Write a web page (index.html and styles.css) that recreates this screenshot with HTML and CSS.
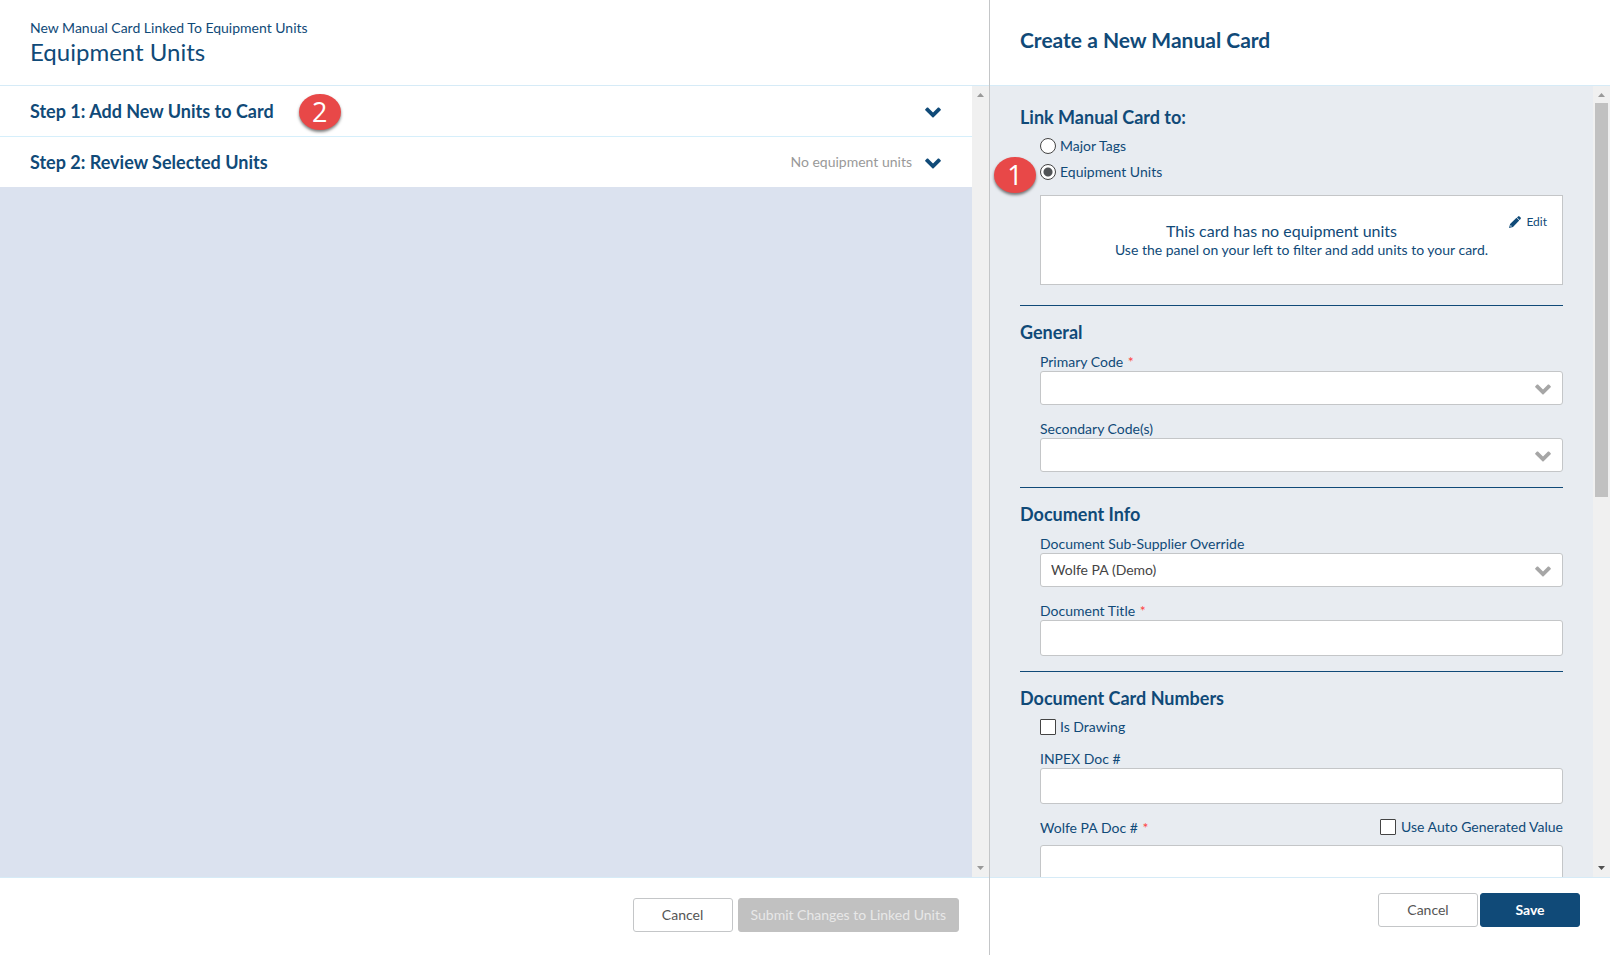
FILE: index.html
```
<!DOCTYPE html>
<html lang="en">
<head>
<meta charset="utf-8">
<title>Create a New Manual Card</title>
<link rel="stylesheet" href="styles.css">
</head>
<body>
<svg class="sprite" aria-hidden="true">
  <symbol id="chevron" viewBox="0 0 16 11"><path d="M0.3 2.3 2 0.6Q2.5 0.2 3 0.6L8 5.6 13 0.6Q13.5 0.2 14 0.6L15.7 2.3Q16.1 2.8 15.7 3.3L8.4 10.4Q8 10.8 7.6 10.4L0.3 3.3Q-0.1 2.8 0.3 2.3z"/></symbol>
  <symbol id="pencil" viewBox="0 0 12 12"><path d="M8 1.4 9.1 0.4Q9.8-0.2 10.5 0.4L11.6 1.5Q12.2 2.2 11.6 2.9L10.6 4zM7.5 1.8 10.2 4.5 4 10.9 0 12 1.1 8zM1.7 9.1 1.3 10.7 2.9 10.3z" fill-rule="evenodd"/></symbol>
  <symbol id="up" viewBox="0 0 7 4"><path d="M0 4 3.5 0 7 4z"/></symbol>
  <symbol id="down" viewBox="0 0 7 4"><path d="M0 0H7L3.5 4z"/></symbol>
</svg>
<div class="app">
  <main class="pane pane-main">
    <header class="pane-header">
      <p class="kicker">New Manual Card Linked To Equipment Units</p>
      <h1 class="title">Equipment Units</h1>
    </header>
    <div class="pane-body">
      <div class="steps">
        <button type="button" class="step">
          <span class="step-title">Step 1: Add New Units to Card</span>
          <span class="badge">2</span>
          <svg class="chevron step-chevron"><use href="#chevron"/></svg>
        </button>
        <button type="button" class="step">
          <span class="step-title">Step 2: Review Selected Units</span>
          <span class="step-note">No equipment units</span>
          <svg class="chevron step-chevron"><use href="#chevron"/></svg>
        </button>
      </div>
      <div class="scrollbar" aria-hidden="true">
        <svg class="arrow"><use href="#up"/></svg>
        <svg class="arrow"><use href="#down"/></svg>
      </div>
    </div>
    <footer class="pane-footer">
      <button type="button" class="button">Cancel</button>
      <button type="button" class="button button-disabled" disabled>Submit Changes to Linked Units</button>
    </footer>
  </main>

  <aside class="pane pane-side">
    <header class="pane-header side-header">
      <h2 class="side-title">Create a New Manual Card</h2>
    </header>
    <div class="pane-body">
      <form class="form" id="card-form">
        <section class="section">
          <h3 class="section-title">Link Manual Card to:</h3>
          <div class="section-content">
            <label class="choice"><input class="radio" type="radio" name="link">Major Tags</label>
            <label class="choice"><input class="radio" type="radio" name="link" checked>Equipment Units<span class="badge badge-over">1</span></label>
            <div class="notice">
              <p class="notice-title">This card has no equipment units</p>
              <p class="notice-text">Use the panel on your left to filter and add units to your card.</p>
              <button type="button" class="edit"><svg class="pencil"><use href="#pencil"/></svg>Edit</button>
            </div>
          </div>
        </section>
        <section class="section">
          <h3 class="section-title">General</h3>
          <div class="section-content fields">
            <div class="field">
              <label class="label" for="primary">Primary Code <span class="required">*</span></label>
              <div class="select-wrap"><select class="control select" id="primary"><option></option></select><svg class="chevron select-chevron"><use href="#chevron"/></svg></div>
            </div>
            <div class="field">
              <label class="label" for="secondary">Secondary Code(s)</label>
              <div class="select-wrap"><select class="control select" id="secondary"><option></option></select><svg class="chevron select-chevron"><use href="#chevron"/></svg></div>
            </div>
          </div>
        </section>
        <section class="section">
          <h3 class="section-title">Document Info</h3>
          <div class="section-content fields">
            <div class="field">
              <label class="label" for="supplier">Document Sub-Supplier Override</label>
              <div class="select-wrap"><select class="control select" id="supplier"><option>Wolfe PA (Demo)</option></select><svg class="chevron select-chevron"><use href="#chevron"/></svg></div>
            </div>
            <div class="field">
              <label class="label" for="doc-title">Document Title <span class="required">*</span></label>
              <input class="control" id="doc-title" type="text">
            </div>
          </div>
        </section>
        <section class="section">
          <h3 class="section-title">Document Card Numbers</h3>
          <div class="section-content">
            <label class="choice"><input class="checkbox" type="checkbox">Is Drawing</label>
            <div class="fields numbers">
              <div class="field">
                <label class="label" for="inpex">INPEX Doc #</label>
                <input class="control" id="inpex" type="text">
              </div>
              <div class="field">
                <div class="label-row">
                  <label class="label" for="wolfe">Wolfe PA Doc # <span class="required">*</span></label>
                  <label class="choice choice-inline"><input class="checkbox" type="checkbox">Use Auto Generated Value</label>
                </div>
                <input class="control" id="wolfe" type="text">
              </div>
            </div>
          </div>
        </section>
      </form>
      <div class="scrollbar" aria-hidden="true">
        <svg class="arrow"><use href="#up"/></svg>
        <span class="track"><span class="thumb"></span></span>
        <svg class="arrow arrow-active"><use href="#down"/></svg>
      </div>
    </div>
    <footer class="pane-footer side-footer">
      <button type="button" class="button">Cancel</button>
      <button type="submit" form="card-form" class="button button-primary">Save</button>
    </footer>
  </aside>
</div>
</body>
</html>
```
FILE: styles.css
```
*, *::before, *::after { box-sizing: border-box; }

body {
  margin: 0;
  background: #fff;
  color: #104a78;
  font: 14px/18px Lato, "Open Sans", sans-serif;
}

h1, h2, h3, p { margin: 0; }
button, input, select { font: inherit; }

.sprite { display: none; }

.app {
  display: grid;
  grid-template-columns: minmax(0, 1fr) 621px;
  height: 100vh;
}

.pane {
  display: grid;
  grid-template-rows: 86px minmax(0, 1fr) 78px;
  min-width: 0;
  min-height: 0;
}
.pane-side { border-left: 1px solid #c4c6c8; }

.pane-header {
  padding: 18px 30px 0;
  border-bottom: 1px solid #d6ebf7;
}
.side-header {
  display: flex;
  align-items: center;
  padding: 0 30px 6px;
}
.kicker { line-height: 20px; }
.title { font-size: 24px; line-height: 28px; font-weight: 400; }
.side-title { font-size: 21px; line-height: 28px; font-weight: 700; }

.pane-body { display: flex; min-height: 0; }

/* Steps */
.steps { flex: 1; min-width: 0; background: #dbe2ef; }
.step {
  display: flex;
  align-items: center;
  width: 100%;
  height: 51px;
  padding: 0 31px 0 30px;
  border: 0;
  border-bottom: 1px solid #d6effb;
  background: #fff;
  color: inherit;
  text-align: left;
}
.step:last-child { height: 50px; border-bottom: 0; }
.step-title { font-size: 18px; line-height: 24px; font-weight: 700; }
.step-note { margin-left: auto; color: #999; }
.step-chevron { margin: 2px 0 0 auto; }
.step-note + .step-chevron { margin-left: 13px; }
.chevron { width: 16px; height: 11px; flex: none; fill: currentColor; }

.badge {
  display: flex;
  align-items: center;
  justify-content: center;
  width: 42px;
  height: 36px;
  margin: 2px 0 0 25px;
  border-radius: 50%;
  background: #e84848;
  box-shadow: 0 2px 3px rgba(0, 0, 0, .5);
  color: #fff;
  font: 27px/36px "Open Sans", sans-serif;
}
.badge-over {
  position: absolute;
  top: -2px;
  left: -46px;
  margin: 0;
}

/* Scrollbars */
.scrollbar {
  display: flex;
  flex-direction: column;
  align-items: center;
  justify-content: space-between;
  flex: none;
  width: 17px;
  padding: 7px 0;
  background: #f0f0f0;
}
.arrow { width: 7px; height: 4px; flex: none; fill: #999; }
.arrow-active { fill: #505050; }
.track { flex: 1; width: 13px; margin: 6px 0; }
.thumb { display: block; height: 52%; background: #c1c1c1; }

/* Form */
.form {
  flex: 1;
  min-width: 0;
  padding: 5px 30px;
  overflow: auto;
  scrollbar-width: none;
  background: #e8ecf1;
}
.section { padding: 14px 0 15px; border-bottom: 1px solid #104a78; }
.section:first-child { padding-bottom: 20px; }
.section:last-child { border-bottom: 0; }
.section-title { margin-bottom: 4px; font-size: 18px; line-height: 24px; font-weight: 700; }
.section-content { padding-left: 20px; }
.fields { display: grid; gap: 15px; padding-top: 5px; }
.numbers { padding-top: 10px; }

.label { display: block; }
.label-row {
  display: flex;
  justify-content: space-between;
  margin-bottom: 8px;
}
.required { margin-left: 1px; color: #f44; }

.choice {
  display: flex;
  align-items: center;
  gap: 4px;
  position: relative;
  height: 26px;
}
.choice-inline { gap: 5px; height: 16px; }

.radio, .checkbox {
  appearance: none;
  width: 16px;
  height: 16px;
  margin: 0;
  border: 1px solid #444;
  background: #fff;
}
.checkbox { border-radius: 1px; }
.radio { border-radius: 50%; }
.radio:checked {
  background: radial-gradient(circle, #505356 0 4px, #fff 5px);
}

.notice {
  position: relative;
  height: 90px;
  margin-top: 10px;
  padding: 25px 15px 0;
  border: 1px solid #c4c6c8;
  background: #fff;
}
.notice-title { padding-right: 40px; font-size: 16px; line-height: 20px; text-align: center; }
.notice-text { text-align: center; }
.edit {
  display: flex;
  align-items: center;
  gap: 5px;
  position: absolute;
  top: 17px;
  right: 15px;
  padding: 0;
  border: 0;
  background: none;
  color: inherit;
  font-size: 12px;
}
.pencil { width: 12px; height: 12px; fill: currentColor; }

.control {
  display: block;
  width: 100%;
  height: 36px;
  padding: 0 10px;
  border: 1px solid #c4c6c8;
  border-radius: 3px;
  background: #fff;
  color: #444;
}
.select-wrap { position: relative; }
.select { appearance: none; height: 34px; }
.select-chevron {
  position: absolute;
  top: 13px;
  right: 12px;
  color: #a6a6a6;
  pointer-events: none;
}

/* Footers */
.pane-footer {
  display: flex;
  align-items: flex-start;
  justify-content: flex-end;
  gap: 5px;
  padding: 20px 30px;
  border-top: 1px solid #d6ebf7;
}
.side-footer { gap: 2px; padding-top: 15px; }
.button {
  min-width: 100px;
  height: 34px;
  padding: 0 12px;
  border: 1px solid #c4c6c8;
  border-radius: 3px;
  background: #fff;
  color: #555;
}
.button-disabled { border-color: #c1c1c1; background: #c1c1c1; color: #e8e8e8; }
.button-primary { border-color: #104a78; background: #104a78; color: #fff; font-weight: 700; }
```
